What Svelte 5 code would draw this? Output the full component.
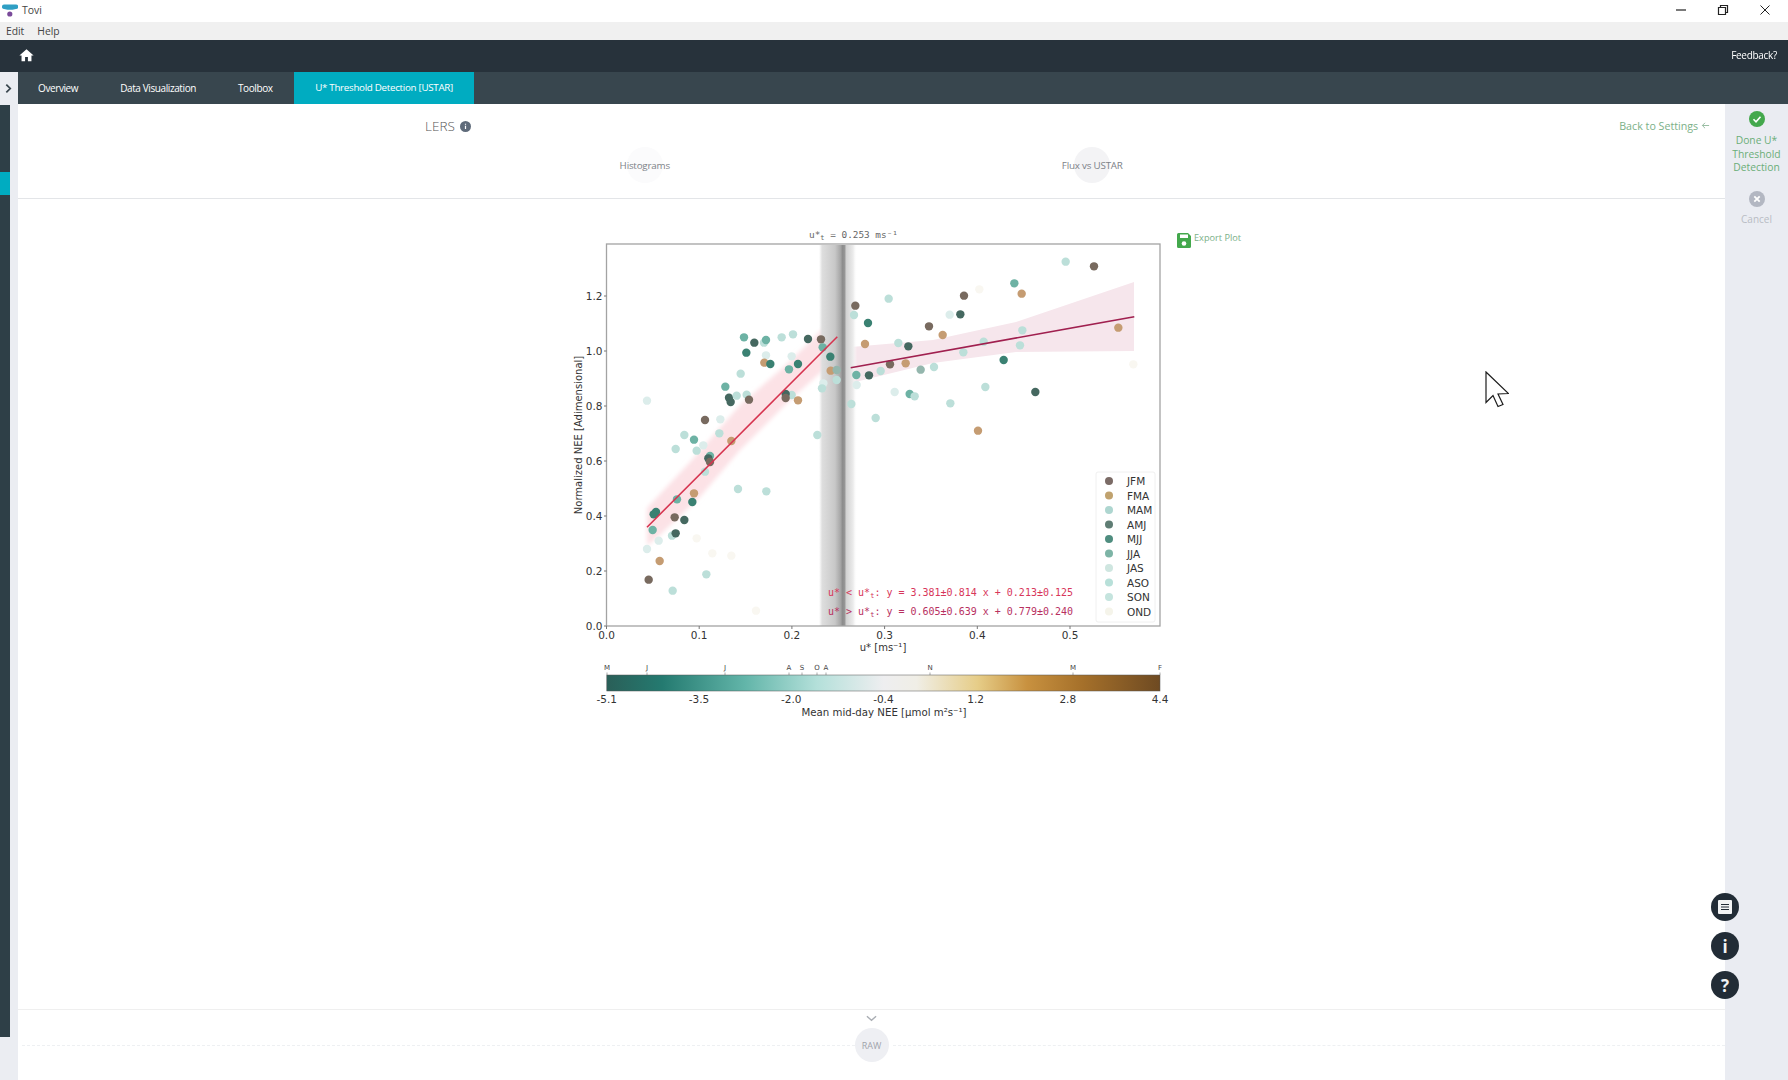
<script>
	// scatter points were read off crops, so keep them in crop space and map to page px
	const left = [
		[552,352,'J'],[583,368,'D'],[612,368,'L'],[618,360,'J'],[665,352,'L'],[699,343,'L'],[744,357,'D'],[783,358,'B'],
		[788,382,'J'],[811,410,'M'],[559,398,'M'],[618,406,'V'],[613,428,'A'],[631,432,'M'],[695,409,'V'],[714,432,'M'],
		[687,448,'J'],[542,461,'L'],[812,452,'A'],[830,450,'G'],[830,480,'L'],[790,490,'V'],[786,505,'L'],[496,500,'J'],
		[507,533,'D'],[512,546,'D'],[530,527,'L'],[560,524,'L'],[567,539,'B'],[695,525,'L'],[677,522,'D'],[677,534,'B'],
		[714,541,'A'],[261,542,'V'],[435,600,'B'],[481,598,'V'],[478,640,'L'],[373,645,'L'],[772,645,'L'],
		[886,257,'B'],[882,285,'L'],[986,236,'L'],[924,309,'M'],[915,372,'A'],[1015,369,'L'],[990,433,'B'],[889,465,'J'],
		[927,466,'D'],[962,453,'L'],[890,495,'V'],[1004,516,'V'],[874,552,'L'],[947,594,'L']
	];
	const right = [
		[497,125,'L'],[582,139,'B'],[343,190,'J'],[365,221,'A'],[238,208,'O'],[192,227,'B'],[149,284,'V'],[181,283,'D'],
		[87,319,'B'],[128,345,'A'],[367,331,'L'],[251,365,'L'],[360,376,'L'],[190,397,'L'],[25,379,'D'],[17,430,'A'],
		[62,449,'G'],[102,441,'L'],[655,323,'A'],[311,420,'M'],[700,433,'O'],[29,522,'J'],[44,529,'L'],[256,501,'L'],
		[151,550,'L'],[406,516,'D'],[234,632,'A']
	];
	const lower = [
		[402,29,'J'],[347,57,'L'],[410,62,'L'],[430,46,'V'],[514,33,'A'],[435,125,'L'],[450,78,'J'],[445,85,'D'],[450,96,'B'],
		[534,177,'L'],[619,184,'L'],[402,190,'A'],[351,208,'J'],[397,216,'M'],[288,246,'M'],[281,253,'M'],[344,262,'B'],
		[373,270,'D'],[278,300,'J'],[336,317,'L'],[347,310,'D'],[296,332,'V'],[261,357,'V'],[410,325,'O'],[457,370,'O'],
		[514,377,'O'],[299,393,'A'],[266,449,'B'],[439,433,'L'],[338,482,'L'],[588,542,'O']
	];
	const dotColors = {
		B: '#786a5f', A: '#c59c72', D: '#456860', M: '#3a8172', J: '#6db2a4',
		G: '#94b6ad', L: '#bcdfd9', V: '#dcedeb', O: '#f9f7f1'
	};
	const dots = [
		...left.map(([x, y, c]) => [560 + x / 3, 220 + y / 3, c]),
		...right.map(([x, y, c]) => [900 + x / 3, 220 + y / 3, c]),
		...lower.map(([x, y, c]) => [560 + x / 3, 430 + y / 3, c])
	];

	const xTicks = ['0.0', '0.1', '0.2', '0.3', '0.4', '0.5'].map((label, i) => ({ label, x: 606.5 + i * 92.7 }));
	const yTicks = ['0.0', '0.2', '0.4', '0.6', '0.8', '1.0', '1.2'].map((label, i) => ({ label, y: 626 - i * 55 }));

	const legend = [
		['JFM', '#7b6b66'], ['FMA', '#c0a26e'], ['MAM', '#aed6d0'], ['AMJ', '#5f7d74'], ['MJJ', '#4f8d7f'],
		['JJA', '#7db4a6'], ['JAS', '#cfe6e0'], ['ASO', '#b8e0d9'], ['SON', '#c5e4de'], ['OND', '#f5f4ea']
	];
	const months = [
		['M', 607], ['J', 647], ['J', 725], ['A', 789], ['S', 802], ['O', 817], ['A', 826], ['N', 930], ['M', 1073], ['F', 1160]
	];
	const barTicks = ['-5.1', '-3.5', '-2.0', '-0.4', '1.2', '2.8', '4.4'].map((label, i) => ({ label, x: 606.8 + i * 92.2 }));
	const barStops = [
		[0, '#2a5f58'], [0.1, '#247a70'], [0.25, '#62b5a9'], [0.38, '#b4e0da'], [0.5, '#eeeef0'], [0.56, '#f0eee6'],
		[0.67, '#e6cd88'], [0.76, '#c8913f'], [0.86, '#a5702a'], [1, '#6e4a22']
	];
	const tabs = ['Overview', 'Data Visualization', 'Toolbox'];
</script>

<div class="app">
	<header class="titlebar">
		<svg class="logo" viewBox="0 0 16 13" width="16" height="13">
			<path d="M0 2.5A2 2 0 0 1 2 .5h12a2 2 0 0 1 0 4.5l-3.5.8h-5L2 5A2 2 0 0 1 0 2.5z" fill="#2f9fc4" />
			<circle cx="7.8" cy="10" r="2.6" fill="#7a4a9a" />
		</svg>
		<span class="app-name">Tovi</span>
		<div class="window-buttons">
			<svg viewBox="0 0 12 12" width="12" height="12"><path d="M1 6h10" stroke="#222" stroke-width="1.2" /></svg>
			<svg viewBox="0 0 12 12" width="12" height="12"><path d="M1.5 3.5h7v7h-7zM3.5 3V1.5h7v7H9" fill="none" stroke="#222" stroke-width="1.2" /></svg>
			<svg viewBox="0 0 12 12" width="12" height="12"><path d="M1.5 1.5l9 9M10.5 1.5l-9 9" stroke="#222" stroke-width="1" /></svg>
		</div>
	</header>
	<nav class="menubar"><span>Edit</span><span>Help</span></nav>
	<div class="topnav">
		<svg viewBox="0 0 24 24" width="17" height="17"><path d="M10 20v-6h4v6h5v-8h3L12 3 2 12h3v8z" fill="#fff" /></svg>
		<span class="feedback">Feedback?</span>
	</div>

	<div class="workspace">
		<aside class="side">
			<div class="expand">
				<svg viewBox="0 0 8 12" width="7" height="11"><path d="M1.5 1.5L6 6l-4.500 4.500" fill="none" stroke="#39464e" stroke-width="2" /></svg>
			</div>
			<div class="rail"><div class="rail-active"></div></div>
		</aside>

		<div class="center">
			<div class="tabs">
				{#each tabs as tab}
					<span class="tab">{tab}</span>
				{/each}
				<span class="tab active">U* Threshold Detection [USTAR]</span>
			</div>

			<div class="main">
				<section class="content">
					<div class="head">
						<div class="head-row">
							<div class="site">
								<span>LERS</span>
								<svg viewBox="0 0 12 12" width="11" height="11">
									<circle cx="6" cy="6" r="6" fill="#5f6b7a" />
									<path d="M6 5.200v3.600M6 3v1.200" stroke="#fff" stroke-width="1.300" />
								</svg>
							</div>
							<div class="back">Back to Settings
								<svg viewBox="0 0 10 10" width="9" height="9"><path d="M9 5H1.500M4.500 2L1.500 5l3 3" fill="none" stroke="#8fb79a" stroke-width="1" /></svg>
							</div>
						</div>
						<div class="switch">
							<div class="switch-item"><span class="halo faint"></span><span class="switch-label">Histograms</span></div>
							<div class="switch-item"><span class="halo"></span><span class="switch-label">Flux vs USTAR</span></div>
						</div>
					</div>

					<div class="plot-area">
						<svg class="chart" viewBox="560 225 610 510" width="610" height="510">
							<defs>
								<linearGradient id="threshold" x1="0" x2="1" y1="0" y2="0">
									<stop offset="0" stop-color="#e6e6e6" stop-opacity="0" />
									<stop offset="0.08" stop-color="#dedede" />
									<stop offset="0.42" stop-color="#c8c8c8" />
									<stop offset="0.56" stop-color="#a8a8a8" />
									<stop offset="0.62" stop-color="#8c8c8c" />
									<stop offset="0.67" stop-color="#949494" />
									<stop offset="0.72" stop-color="#d2d2d2" />
									<stop offset="0.9" stop-color="#ececec" />
									<stop offset="1" stop-color="#fff" stop-opacity="0" />
								</linearGradient>
								<linearGradient id="colorbar" x1="0" x2="1" y1="0" y2="0">
									{#each barStops as [offset, color]}
										<stop {offset} stop-color={color} />
									{/each}
								</linearGradient>
								<filter id="soft" x="-10%" y="-10%" width="120%" height="120%"><feGaussianBlur stdDeviation="2" /></filter>
							</defs>

							<polygon points="647,508 690,462 740,405 786,365 837,315 837,358 790,400 740,450 700,497 660,535 647,546" fill="#fce2e6" filter="url(#soft)" />
							<polygon points="851,347 933,340 1016,322 1134,282 1134,351 1016,352 933,363 851,383" fill="#f6e6ec" />
							<rect x="819" y="245" width="38" height="381" fill="url(#threshold)" />

							{#each dots as [x, y, c]}
								<circle cx={x} cy={y} r="4.200" fill={dotColors[c]} />
							{/each}

							<line x1="647" y1="527.300" x2="837.300" y2="336.700" stroke="#d6334f" stroke-width="1.600" />
							<line x1="850.700" y1="367.700" x2="1134.300" y2="316.700" stroke="#a0204f" stroke-width="1.600" />

							<rect x="606.500" y="244" width="553.500" height="382" fill="none" stroke="#a3a3a3" stroke-width="1.300" />

							{#each yTicks as t}
								<line x1="604" x2="606.500" y1={t.y} y2={t.y} stroke="#777" />
								<text class="tick" x="602.500" y={t.y + 4} text-anchor="end">{t.label}</text>
							{/each}
							{#each xTicks as t}
								<line x1={t.x} x2={t.x} y1="626" y2="629" stroke="#777" />
								<text class="tick" x={t.x} y="639" text-anchor="middle">{t.label}</text>
							{/each}

							<text class="mono title" x="853.500" y="238" text-anchor="middle">u*<tspan dy="2" font-size="7">t</tspan><tspan dy="-2">&nbsp;= 0.253 ms⁻¹</tspan></text>
							<text class="axis" transform="translate(582 435) rotate(-90)" text-anchor="middle">Normalized NEE [Adimensional]</text>
							<text class="axis" x="883" y="650.500" text-anchor="middle">u* [ms⁻¹]</text>

							<text class="mono eq" x="828" y="595.500" fill="#d8365a">u* &lt; u*<tspan dy="2" font-size="7">t</tspan><tspan dy="-2">: y = 3.381±0.814 x + 0.213±0.125</tspan></text>
							<text class="mono eq" x="828" y="614.500" fill="#b8305f">u* &gt; u*<tspan dy="2" font-size="7">t</tspan><tspan dy="-2">: y = 0.605±0.639 x + 0.779±0.240</tspan></text>

							<rect x="1096" y="472" width="59" height="150" rx="2" fill="#fff" stroke="#f0f0f0" />
							{#each legend as [name, color], i}
								<circle cx="1109" cy={481 + i * 14.500} r="4" fill={color} />
								<text class="tick" x="1127" y={485 + i * 14.500}>{name}</text>
							{/each}

							{#each months as [m, x]}
								<text class="month" {x} y="670" text-anchor="middle">{m}</text>
								<line x1={x} x2={x} y1="672.500" y2="675" stroke="#888" stroke-width="0.700" />
							{/each}
							<rect x="606.800" y="675" width="553.200" height="16" fill="url(#colorbar)" stroke="#555" stroke-width="0.500" />
							{#each barTicks as t}
								<text class="tick" x={t.x} y="703" text-anchor="middle">{t.label}</text>
							{/each}
							<text class="axis wide" x="884" y="716" text-anchor="middle">Mean mid-day NEE [μmol m²s⁻¹]</text>
						</svg>
						<div class="export">
							<svg viewBox="0 0 14 15" width="14" height="15">
								<path d="M1.500 0h9.500L14 3v10.500a1.500 1.500 0 0 1-1.500 1.500h-11A1.500 1.500 0 0 1 0 13.500v-12A1.500 1.500 0 0 1 1.500 0z" fill="#43a84c" />
								<rect x="3" y="1.500" width="8" height="3.500" fill="#fff" />
								<circle cx="7" cy="10.500" r="2.300" fill="#fff" />
							</svg>
							<span>Export Plot</span>
						</div>
					</div>

					<footer class="raw">
						<svg viewBox="0 0 12 7" width="11" height="7"><path d="M1 1l5 4.500L11 1" fill="none" stroke="#a9adb3" stroke-width="1.500" /></svg>
						<div class="raw-row">
							<span class="dash"></span>
							<span class="raw-button">RAW</span>
							<span class="dash"></span>
						</div>
					</footer>
				</section>

				<aside class="actions">
					<svg viewBox="0 0 16 16" width="16" height="16">
						<circle cx="8" cy="8" r="8" fill="#43a84c" />
						<path d="M4.500 8.300l2.500 2.500 4.500-5" fill="none" stroke="#fff" stroke-width="1.600" />
					</svg>
					<div class="done">Done U*<br />Threshold<br />Detection</div>
					<svg class="cancel-icon" viewBox="0 0 16 16" width="16" height="16">
						<circle cx="8" cy="8" r="8" fill="#b3b7c2" />
						<path d="M5.300 5.300l5.400 5.400M10.700 5.300l-5.400 5.400" stroke="#fff" stroke-width="1.800" />
					</svg>
					<div class="cancel">Cancel</div>
				</aside>
			</div>
		</div>
	</div>

	<div class="fab-stack">
		<div class="fab">
			<svg viewBox="0 0 14 14" width="14" height="14">
				<rect width="14" height="14" rx="1" fill="#f2f3f4" />
				<path d="M3 4.500h8M3 7h8M3 9.500h8" stroke="#222c36" stroke-width="1.200" />
			</svg>
		</div>
		<div class="fab glyph">i</div>
		<div class="fab glyph">?</div>
	</div>

	<svg class="cursor" viewBox="0 0 24 40" width="24" height="40">
		<path d="M1 1L23.500 22.500 13 23 18 33.500 13 35.500 8 24.500 1 31.500z" fill="#fff" stroke="#1d1d1d" stroke-width="1.200" />
	</svg>
</div>

<style>
	:global(body) {
		margin: 0;
		background: #fff;
	}
	.app {
		position: relative;
		width: 1788px;
		height: 1080px;
		overflow: hidden;
		display: flex;
		flex-direction: column;
		font-family: 'Open Sans', 'Liberation Sans', sans-serif;
		color: #333;
		/* the reference is a compressed video frame, everything is slightly soft */
		filter: blur(0.35px);
	}
	.titlebar {
		height: 22px;
		flex: none;
		display: flex;
		align-items: center;
		padding: 0 17px 2px 2px;
		box-sizing: border-box;
		background: #fff;
	}
	.logo {
		margin-right: 4px;
	}
	.app-name {
		font-size: 10.500px;
		color: #444;
	}
	.window-buttons {
		margin-left: auto;
		display: flex;
		gap: 30px;
	}
	.menubar {
		height: 18px;
		flex: none;
		display: flex;
		align-items: center;
		gap: 13px;
		padding-left: 6px;
		background: #f0f0f0;
		font-size: 10.300px;
		color: #444;
	}
	.topnav {
		height: 32px;
		flex: none;
		display: flex;
		align-items: center;
		justify-content: space-between;
		padding: 0 11px 2px 18px;
		box-sizing: border-box;
		background: #27323b;
	}
	.feedback {
		color: #fff;
		font-size: 10px;
		letter-spacing: -0.3px;
	}
	.workspace {
		flex: 1;
		display: flex;
		min-height: 0;
	}
	.side {
		width: 18px;
		flex: none;
		display: flex;
		flex-direction: column;
		background: #ebedf2;
	}
	.expand {
		height: 33px;
		flex: none;
		display: flex;
		align-items: center;
		justify-content: center;
		padding-right: 2px;
		box-sizing: border-box;
	}
	.rail {
		flex: 1;
		width: 10px;
		margin-bottom: 43px;
		padding-top: 67px;
		box-sizing: border-box;
		background: #2e3f47;
	}
	.rail-active {
		height: 23px;
		background: #00acc1;
	}
	.center {
		flex: 1;
		min-width: 0;
		display: flex;
		flex-direction: column;
	}
	.tabs {
		height: 32px;
		flex: none;
		display: flex;
		background: #38464e;
	}
	.tab {
		padding: 0 21px;
		display: flex;
		align-items: center;
		color: #fff;
		font-size: 10px;
		letter-spacing: -0.4px;
	}
	.tab:first-child {
		padding-left: 20px;
	}
	.tab.active {
		padding: 0 21.500px 2px;
		box-sizing: border-box;
		background: #00acc1;
		font-size: 9.800px;
		letter-spacing: -0.3px;
	}
	.main {
		flex: 1;
		display: flex;
		min-height: 0;
	}
	.content {
		flex: 1;
		min-width: 0;
		display: flex;
		flex-direction: column;
		background: #fff;
	}
	.head {
		height: 95px;
		flex: none;
		box-sizing: border-box;
		border-bottom: 1px solid #e3e5e8;
	}
	.head-row {
		height: 43px;
		display: flex;
		justify-content: space-between;
		padding: 13px 15px 0 407px;
		box-sizing: border-box;
	}
	.site {
		display: flex;
		align-items: flex-start;
		gap: 5px;
		font-size: 13.500px;
		line-height: 18px;
		font-weight: 300;
		color: #555;
	}
	.site svg {
		margin-top: 4px;
	}
	.back {
		font-size: 10.700px;
		line-height: 18px;
		color: #7bb088;
	}
	.switch {
		display: flex;
		padding-left: 403px;
	}
	.switch-item {
		width: 447.500px;
		height: 36px;
		position: relative;
		display: flex;
		align-items: center;
		justify-content: center;
	}
	.halo {
		width: 36px;
		height: 36px;
		border-radius: 50%;
		background: #f3f3f5;
	}
	.halo.faint {
		background: #fbfbfc;
	}
	.switch-label {
		position: absolute;
		left: 0;
		right: 0;
		text-align: center;
		font-size: 9.800px;
		letter-spacing: -0.2px;
		color: #7d8288;
	}
	.plot-area {
		flex: 1;
		min-height: 0;
		display: flex;
		align-items: flex-start;
		padding: 26px 0 0 542px;
		gap: 7px;
	}
	.chart {
		flex: none;
	}
	.tick {
		font: 10.500px 'DejaVu Sans', sans-serif;
		fill: #333;
	}
	.axis {
		font: 10px 'DejaVu Sans', sans-serif;
		fill: #333;
	}
	.axis.wide {
		font-size: 10.200px;
	}
	.month {
		font: 7px 'DejaVu Sans', sans-serif;
		fill: #444;
	}
	.mono {
		font-family: 'DejaVu Sans Mono', monospace;
	}
	.title {
		font-size: 9.400px;
		fill: #666;
	}
	.eq {
		font-size: 10px;
	}
	.export {
		display: flex;
		gap: 3px;
		margin-top: 8px;
		font-size: 9.200px;
		line-height: 10px;
		color: #7bb088;
	}
	.raw {
		height: 71px;
		flex: none;
		box-sizing: border-box;
		border-top: 1px solid #efefef;
		display: flex;
		flex-direction: column;
		align-items: center;
		padding-top: 5px;
		gap: 6px;
	}
	.raw-row {
		align-self: stretch;
		display: flex;
		align-items: center;
	}
	.dash {
		flex: 1;
		margin: 0 0 0 4px;
		border-top: 1px dashed #eef0f2;
	}
	.raw-button {
		width: 34px;
		height: 34px;
		flex: none;
		border-radius: 50%;
		display: flex;
		align-items: center;
		justify-content: center;
		background: #eeeff3;
		font-size: 9px;
		color: #a0a3ab;
	}
	.actions {
		width: 63px;
		flex: none;
		display: flex;
		flex-direction: column;
		align-items: center;
		padding-top: 7px;
		box-sizing: border-box;
		background: #eaecf2;
		text-align: center;
	}
	.done {
		margin-top: 7px;
		font-size: 10.300px;
		line-height: 13.700px;
		color: #6aae78;
	}
	.cancel-icon {
		margin-top: 16px;
	}
	.cancel {
		margin-top: 5px;
		font-size: 10px;
		line-height: 14px;
		color: #b9bcc4;
	}
	.fab-stack {
		position: absolute;
		left: 1711px;
		top: 893px;
		display: flex;
		flex-direction: column;
		gap: 11px;
	}
	.fab {
		width: 28px;
		height: 28px;
		border-radius: 50%;
		display: flex;
		align-items: center;
		justify-content: center;
		background: #222c36;
	}
	.glyph {
		color: #f2f3f4;
		font: bold 17px 'Open Sans', sans-serif;
	}
	.cursor {
		position: absolute;
		left: 1485px;
		top: 371px;
	}
</style>
